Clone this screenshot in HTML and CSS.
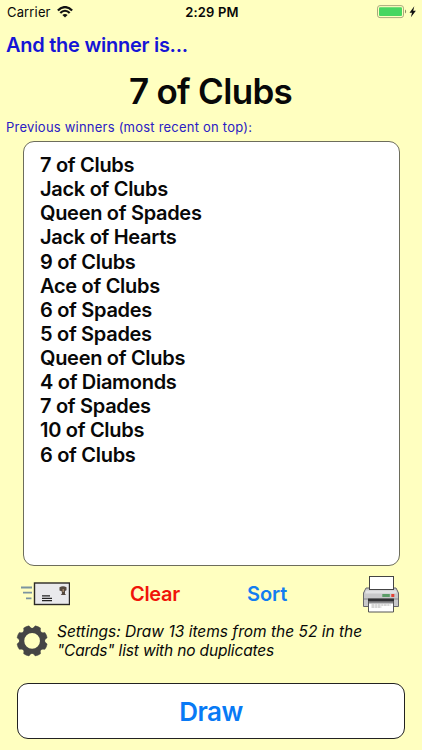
FILE: index.html
```html
<!DOCTYPE html>
<html lang="en">
<head>
<meta charset="utf-8">
<title>Draw</title>
<link rel="stylesheet" href="styles.css">
</head>
<body>
<header class="status">
  <div class="carrier"><span>Carrier</span>
    <svg width="16" height="12" viewBox="0 0 16 12" fill="none" stroke="#111" stroke-width="2.200"><path d="M.9 4.400C5-.1 11-.1 15.100 4.400M3.300 6.900c2.800-2.900 6.600-2.900 9.400 0"/><path d="M8 11.600 5.400 9c1.400-1.300 3.800-1.300 5.200 0z" fill="#111" stroke="none"/></svg>
  </div>
  <span class="time">2:29 PM</span>
  <div class="power">
    <svg width="42" height="14" viewBox="0 0 42 14"><rect x=".5" y=".6" width="26" height="12" rx="2.500" fill="none" stroke="#aaaa7d"/><rect x="2" y="2.200" width="23" height="8.800" rx="1" fill="#48d661"/><path d="M28 4.600c1.500.5 1.500 3.500 0 4z" fill="#8d8d68"/><path d="M37.300 1.300 32.500 7.700h2.500l-1.100 4.600 5-6.500h-2.700z" fill="#111"/></svg>
  </div>
</header>
<main>
  <h1 class="heading">And the winner is...</h1>
  <p class="winner">7 of Clubs</p>
  <p class="label">Previous winners (most recent on top):</p>
  <ul class="history">
    <li>7 of Clubs</li><li>Jack of Clubs</li><li>Queen of Spades</li><li>Jack of Hearts</li><li>9 of Clubs</li><li>Ace of Clubs</li><li>6 of Spades</li><li>5 of Spades</li><li>Queen of Clubs</li><li>4 of Diamonds</li><li>7 of Spades</li><li>10 of Clubs</li><li>6 of Clubs</li>
  </ul>
  <div class="actions">
    <svg width="50" height="24" viewBox="0 0 50 24"><path d="M1 5.500h11M3 10.600h9M6 16.300h5.500" stroke="#7b94a0" stroke-width="1.800"/><rect x="14.500" y="1" width="35" height="21.500" fill="#e9e9ec" stroke="#2b2925" stroke-width="1.400"/><path d="M22 13.800h8M22 16.300h10M22 18.600h10" stroke="#222" stroke-width="1.300"/><path d="M39.500 5.300q3.500-2 7 0v3l-1.500.6v3l1.200 1h-5.400l1.200-1.500-.3-2.200-2.200-.8z" fill="#55493f"/><path d="M42.500 7h1.500v3h-1.500z" fill="#a0856a"/></svg>
    <button class="link clear">Clear</button>
    <button class="link sort">Sort</button>
    <svg class="printer" width="36" height="37" viewBox="0 0 36 37"><path d="M3 12h30l2.500 5v13.500H.5V17z" fill="#c8c8ca" stroke="#66666a"/><path d="M2.500 14.500h31v3h-31z" fill="#e2e2e4"/><rect x="6.500" y=".5" width="24" height="13" fill="#fff" stroke="#444"/><path d="M1 23h34" stroke="#88888a"/><rect x="19.300" y="18" width="7.500" height="3" fill="#5b9c67"/><rect x="28.300" y="18" width="3" height="3" fill="#e44235"/><path d="M5 22.500h26v3.500H5z" fill="#303033"/><path d="M5.500 25.500h25V36h-25z" fill="#fff" stroke="#555"/><path d="M6 26.500h24" stroke="#89898c" stroke-width="2"/><path d="M8.500 29h19M8.500 31h10" stroke="#999" stroke-width=".8" stroke-dasharray="3 .6 2 .5"/></svg>
  </div>
  <div class="settings">
    <svg class="gear" width="32" height="32" viewBox="-15.600 -15.400 31 31"><defs><path id="tooth" d="M-4.800-10.800Q-3.300-12-2.800-14.600Q0-15.300 2.800-14.600Q3.300-12 4.800-10.800z"/></defs><g fill="#454545" stroke="#454545" stroke-width=".4" stroke-linejoin="round" transform="rotate(22.500)"><use href="#tooth"/><use href="#tooth" transform="rotate(45)"/><use href="#tooth" transform="rotate(90)"/><use href="#tooth" transform="rotate(135)"/><use href="#tooth" transform="rotate(180)"/><use href="#tooth" transform="rotate(225)"/><use href="#tooth" transform="rotate(270)"/><use href="#tooth" transform="rotate(315)"/></g><circle r="9.900" fill="none" stroke="#454545" stroke-width="4.600"/></svg>
    <p><span class="line1">Settings: Draw 13 items from the 52 in the</span><br><span class="line2">"Cards" list with no duplicates</span></p>
  </div>
  <button class="draw">Draw</button>
</main>
</body>
</html>
```

FILE: styles.css
```css
* { box-sizing: border-box; }
body { margin: 0; width: 422px; height: 750px; overflow: hidden; background: #ffffc0; color: #080808; font-family: Inter, "Liberation Sans", sans-serif; }
svg { display: block; flex: none; }
p, h1, ul { margin: 0; padding: 0; }
button { font-family: inherit; border: 0; background: none; padding: 0; }
.status { height: 24px; display: grid; grid-template-columns: 1fr auto 1fr; align-items: center; padding: 0 3px 0 7px; font-size: 13px; }
.carrier { display: flex; align-items: center; gap: 6px; letter-spacing: .15px; }
.time { font-weight: 600; font-size: 13px; margin-right: 2px; letter-spacing: .15px; }
.power { justify-self: end; }
main { display: flex; flex-direction: column; }
.heading { height: 44px; line-height: 43px; padding-left: 6px; font-size: 20px; font-weight: 600; color: #1515d6; letter-spacing: -.26px; }
.winner { height: 46px; line-height: 46px; text-align: center; font-size: 35px; font-weight: 600; letter-spacing: -.7px; padding-right: 1px; }
.label { height: 27px; line-height: 27px; padding-left: 6px; font-size: 13px; color: #2a20c4; letter-spacing: .22px; }
.history { list-style: none; width: 377px; height: 425px; margin-left: 23px; padding: 11px 16px; background: #fff; border: 1px solid #6d6d5c; border-radius: 11px; font-size: 20px; font-weight: 600; line-height: 24.120px; letter-spacing: -.3px; }
.actions { height: 55px; display: grid; grid-template-columns: 110px 117px 116px 36px; align-items: center; padding-left: 20px; }
.link { justify-self: start; font-size: 20px; font-weight: 600; line-height: 24px; letter-spacing: -.3px; }
.clear { color: #f01409; }
.sort { color: #127df0; letter-spacing: -.1px; }
.printer { margin-top: 1px; }
.settings { display: flex; align-items: center; height: 39px; padding-left: 16px; gap: 9px; font-size: 15.500px; font-style: italic; line-height: 19px; white-space: nowrap; }
.line2 { letter-spacing: -.16px; }
.draw { width: 388px; height: 56px; margin: 23px 0 0 17px; border: 1px solid #222; border-radius: 11px; background: #fff; color: #087af5; font-size: 26px; font-weight: 600; letter-spacing: -.5px; }
```
